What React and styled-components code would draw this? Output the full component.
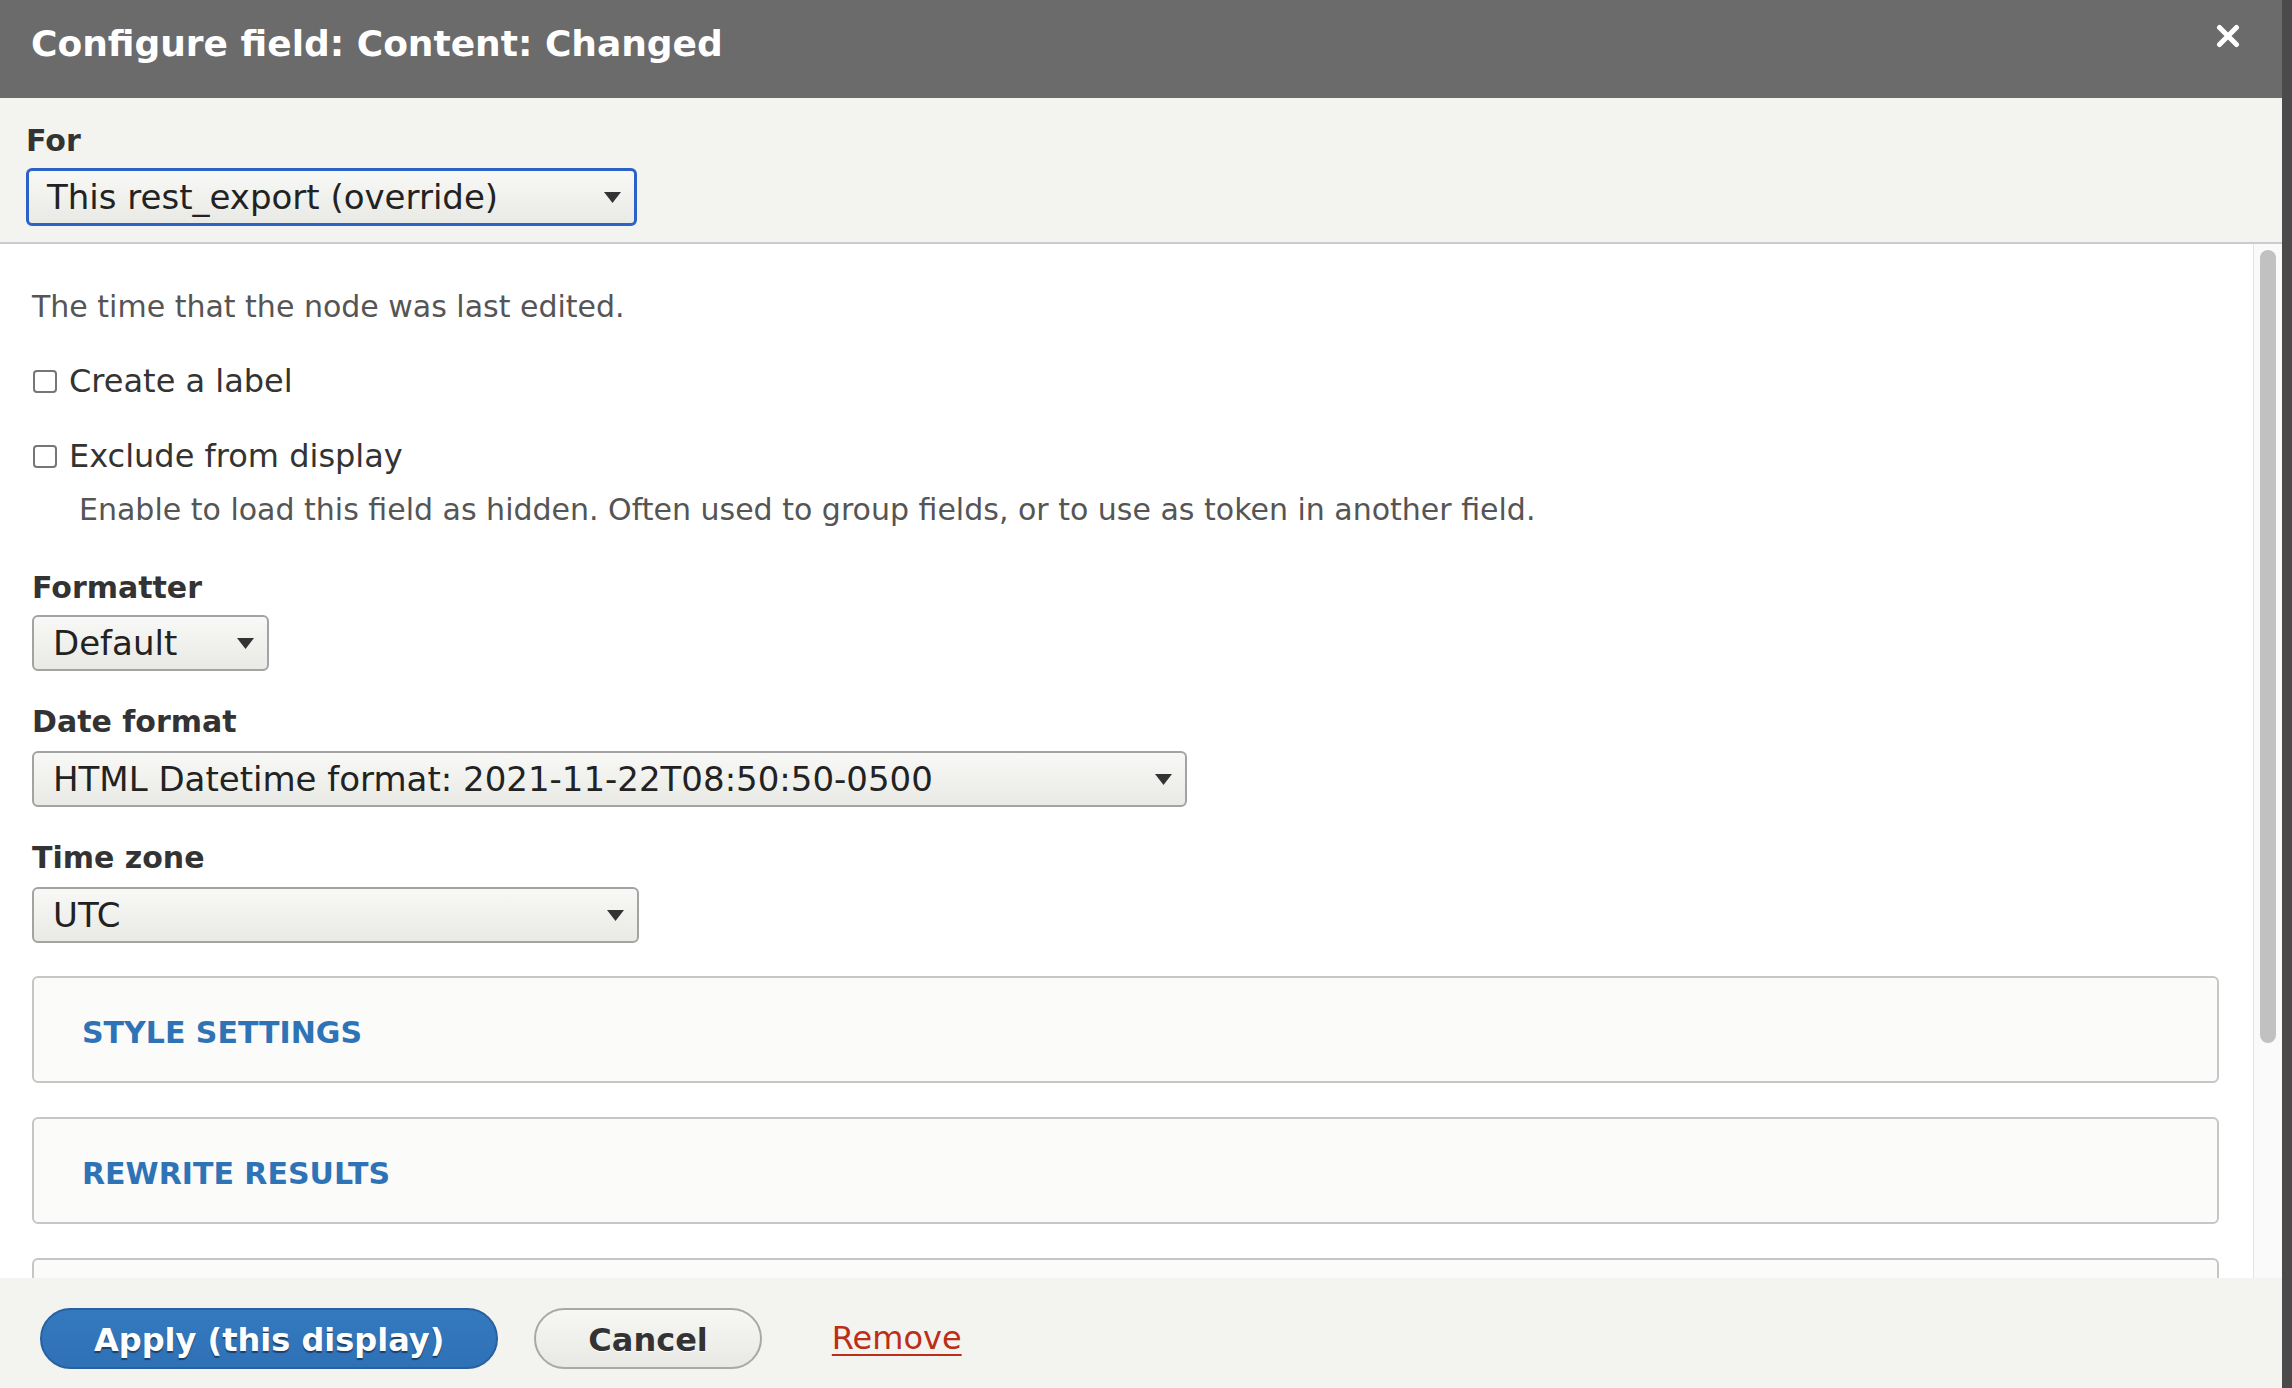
import React from "react";
import styled, { createGlobalStyle } from "styled-components";

const GlobalStyle = createGlobalStyle`
  html, body {
    margin: 0;
    padding: 0;
    background: #4a4a4a;
    font-family: "DejaVu Sans", "Liberation Sans", sans-serif;
  }
  * {
    box-sizing: border-box;
  }
`;

const Dialog = styled.div`
  width: 2282px;
  height: 1388px;
  display: flex;
  flex-direction: column;
  background: #fff;
  overflow: hidden;
`;

const Header = styled.div`
  height: 98px;
  flex: none;
  background: #6b6b6b;
  display: flex;
  justify-content: space-between;
  align-items: flex-start;
  padding: 22px 42px 0 31px;

  h1 {
    margin: 0;
    font-size: 36px;
    line-height: 44px;
    font-weight: bold;
    color: #fff;
  }
`;

const CloseButton = styled.button`
  margin-top: 2px;
  width: 24px;
  height: 24px;
  padding: 0;
  border: 0;
  background: none;
  display: flex;
  cursor: pointer;
`;

const ForSection = styled.div`
  flex: none;
  background: #f3f3ef;
  border-bottom: 2px solid #cccccc;
  padding: 25px 26px 16px;
`;

const Label = styled.div`
  font-size: 30px;
  line-height: 36px;
  font-weight: bold;
  color: #333;
  margin-bottom: ${(props) => props.gap || 10}px;
`;

const SelectBox = styled.div`
  width: ${(props) => props.width}px;
  height: ${(props) => (props.focused ? 58 : 56)}px;
  display: flex;
  align-items: center;
  justify-content: space-between;
  padding: 0 13px 0 ${(props) => (props.focused ? 18 : 19)}px;
  border: ${(props) => (props.focused ? "3px solid #2c62c8" : "2px solid #a3a3a3")};
  border-radius: 6px;
  background: linear-gradient(#f8f8f6, #e9e9e5);
  font-size: 34px;
  color: #222;
  white-space: nowrap;
`;

const Select = ({ value, width, focused }) => (
  <SelectBox width={width} focused={focused}>
    <span>{value}</span>
    <svg width="17" height="11" viewBox="0 0 17 11">
      <path d="M0 0 H17 L8.5 11 Z" fill="#333" />
    </svg>
  </SelectBox>
);

const BodyRow = styled.div`
  flex: 1;
  min-height: 0;
  display: flex;
`;

const ScrollArea = styled.div`
  flex: 1;
  overflow: hidden;
  padding: 45px 34px 0 32px;
`;

const ScrollTrack = styled.div`
  width: 29px;
  flex: none;
  background: #fafafa;
  border-left: 1px solid #e4e4e4;
  padding: 6px 6px 0 6px;
`;

const ScrollThumb = styled.div`
  height: 793px;
  border-radius: 8px;
  background: #c1c1c1;
`;

const Description = styled.p`
  margin: ${(props) => props.top || 0}px 0 0 ${(props) => props.indent || 0}px;
  font-size: 30px;
  line-height: 36px;
  color: #555;
`;

const CheckRow = styled.label`
  display: flex;
  align-items: center;
  gap: 12px;
  margin-top: ${(props) => props.top}px;
  font-size: 32px;
  line-height: 36px;
  color: #333;
`;

const CheckBox = styled.span`
  width: 24px;
  height: 23px;
  margin-left: 1px;
  border: 2px solid #767676;
  border-radius: 4px;
  background: #fff;
`;

const FieldGroup = styled.div`
  margin-top: ${(props) => props.top}px;
`;

const Details = styled.div`
  margin-top: ${(props) => props.top}px;
  height: 107px;
  display: flex;
  align-items: center;
  padding: 5px 48px 0;
  border: 2px solid #c6c6c6;
  border-radius: 6px;
  background: #fbfbf9;
  font-size: 30px;
  font-weight: bold;
  color: #2f73b7;
  text-transform: uppercase;
`;

const Footer = styled.div`
  height: 110px;
  flex: none;
  background: #f3f3ef;
  display: flex;
  align-items: flex-start;
  padding: 30px 40px 0;
`;

const Button = styled.button`
  height: 61px;
  display: inline-flex;
  align-items: center;
  padding: 3px 52px 0;
  line-height: 40px;
  margin-right: ${(props) => props.after}px;
  border-radius: 31px;
  font-family: inherit;
  font-size: 32px;
  font-weight: bold;
  white-space: nowrap;
  cursor: pointer;
  border: 2px solid ${(props) => (props.primary ? "#2761a0" : "#a8a8a8")};
  background: ${(props) =>
    props.primary
      ? "linear-gradient(#3479bf, #2f71b6)"
      : "linear-gradient(#f7f7f4, #e8e8e4)"};
  color: ${(props) => (props.primary ? "#fff" : "#333")};
  text-shadow: ${(props) =>
    props.primary ? "0 2px 1px rgba(0, 0, 0, 0.45)" : "0 1px 0 #fff"};
`;

const DangerLink = styled.a`
  font-size: 32px;
  line-height: 61px;
  color: #bc2e16;
  text-decoration: underline;
  text-decoration-thickness: 2px;
  text-underline-offset: 5px;
  cursor: pointer;
`;

const sections = ["Style settings", "Rewrite results", "No results behavior"];

export default function App() {
  return (
    <>
      <GlobalStyle />
      <Dialog>
        <Header>
          <h1>Configure field: Content: Changed</h1>
          <CloseButton aria-label="Close">
            <svg width="24" height="24" viewBox="0 0 24 24">
              <path
                d="M3.5 3.5 L20.5 20.5 M20.5 3.5 L3.5 20.5"
                stroke="#fff"
                strokeWidth="5"
                strokeLinecap="round"
              />
            </svg>
          </CloseButton>
        </Header>

        <ForSection>
          <Label gap={9}>For</Label>
          <Select value="This rest_export (override)" width={611} focused />
        </ForSection>

        <BodyRow>
          <ScrollArea>
            <Description>The time that the node was last edited.</Description>
            <CheckRow top={38}>
              <CheckBox />
              Create a label
            </CheckRow>
            <CheckRow top={39}>
              <CheckBox />
              Exclude from display
            </CheckRow>
            <Description top={18} indent={47}>
              Enable to load this field as hidden. Often used to group fields, or to use as
              token in another field.
            </Description>

            <FieldGroup top={42}>
              <Label gap={9}>Formatter</Label>
              <Select value="Default" width={237} />
            </FieldGroup>
            <FieldGroup top={33}>
              <Label gap={11}>Date format</Label>
              <Select value="HTML Datetime format: 2021-11-22T08:50:50-0500" width={1155} />
            </FieldGroup>
            <FieldGroup top={33}>
              <Label gap={11}>Time zone</Label>
              <Select value="UTC" width={607} />
            </FieldGroup>

            {sections.map((title, i) => (
              <Details key={title} top={i === 0 ? 33 : 34}>
                {title}
              </Details>
            ))}
          </ScrollArea>
          <ScrollTrack>
            <ScrollThumb />
          </ScrollTrack>
        </BodyRow>

        <Footer>
          <Button primary after={36}>
            Apply (this display)
          </Button>
          <Button after={70}>Cancel</Button>
          <DangerLink>Remove</DangerLink>
        </Footer>
      </Dialog>
    </>
  );
}
